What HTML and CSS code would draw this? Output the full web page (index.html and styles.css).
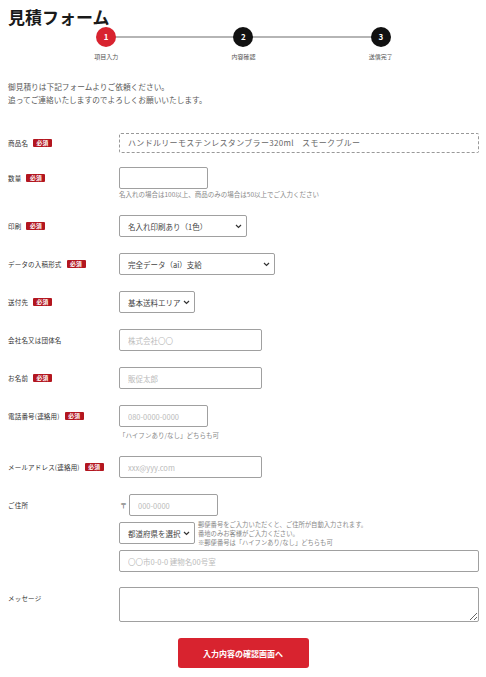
FILE: index.html
```html
<!DOCTYPE html>
<html lang="ja">
<head>
    <meta charset="UTF-8">
    <meta name="viewport" content="width=device-width, initial-scale=1.0">
    <title>見積フォーム</title>
    <link rel="stylesheet" href="styles.css">
</head>
<body>

<div class="page">
    <h1 class="title">見積フォーム</h1>

    <ol class="steps">
        <li class="step current"><span class="step-num">1</span><span class="step-label">項目入力</span></li>
        <li class="step"><span class="step-num">2</span><span class="step-label">内容確認</span></li>
        <li class="step"><span class="step-num">3</span><span class="step-label">送信完了</span></li>
    </ol>

    <p class="intro">御見積りは下記フォームよりご依頼ください。<br>追ってご連絡いたしますのでよろしくお願いいたします。</p>

    <form class="quote-form" onsubmit="event.preventDefault()">
        <div class="row row-first">
            <div class="label short">商品名<span class="req">必須</span></div>
            <div class="field">
                <div class="product">ハンドルリーモステンレスタンブラー320ml　スモークブルー</div>
            </div>
        </div>

        <div class="row">
            <div class="label">数量<span class="req">必須</span></div>
            <div class="field">
                <input type="text" class="input small">
                <div class="hint tight">名入れの場合は100以上、商品のみの場合は50以上でご入力ください</div>
            </div>
        </div>

        <div class="row">
            <div class="label">印刷<span class="req">必須</span></div>
            <div class="field">
                <span class="select-wrap w-print">
                    <select class="select"><option>名入れ印刷あり（1色）</option></select>
                    <svg class="chev" width="7" height="5" viewBox="0 0 7 5"><path d="M1 1l2.5 2.5L6 1" fill="none" stroke="#333" stroke-width="1.2"/></svg>
                </span>
            </div>
        </div>

        <div class="row">
            <div class="label">データの入稿形式<span class="req">必須</span></div>
            <div class="field">
                <span class="select-wrap w-data">
                    <select class="select"><option>完全データ（ai）支給</option></select>
                    <svg class="chev" width="7" height="5" viewBox="0 0 7 5"><path d="M1 1l2.5 2.5L6 1" fill="none" stroke="#333" stroke-width="1.2"/></svg>
                </span>
            </div>
        </div>

        <div class="row">
            <div class="label">送付先<span class="req">必須</span></div>
            <div class="field">
                <span class="select-wrap w-short">
                    <select class="select"><option>基本送料エリア</option></select>
                    <svg class="chev" width="7" height="5" viewBox="0 0 7 5"><path d="M1 1l2.5 2.5L6 1" fill="none" stroke="#333" stroke-width="1.2"/></svg>
                </span>
            </div>
        </div>

        <div class="row">
            <div class="label">会社名又は団体名</div>
            <div class="field"><input type="text" class="input medium" placeholder="株式会社〇〇"></div>
        </div>

        <div class="row">
            <div class="label">お名前<span class="req">必須</span></div>
            <div class="field"><input type="text" class="input medium" placeholder="販促太郎"></div>
        </div>

        <div class="row">
            <div class="label">電話番号(連絡用)<span class="req">必須</span></div>
            <div class="field">
                <input type="tel" class="input small" placeholder="080-0000-0000">
                <div class="hint">「ハイフンあり/なし」どちらも可</div>
            </div>
        </div>

        <div class="row">
            <div class="label">メールアドレス(連絡用)<span class="req">必須</span></div>
            <div class="field"><input type="email" class="input medium" placeholder="xxx@yyy.com"></div>
        </div>

        <div class="row row-address">
            <div class="label">ご住所</div>
            <div class="field address">
                <div class="zip-line">
                    <span class="zip-mark">〒</span>
                    <input type="text" class="input small" placeholder="000-0000">
                </div>
                <div class="pref-line">
                    <span class="select-wrap w-short">
                        <select class="select"><option>都道府県を選択</option></select>
                        <svg class="chev" width="7" height="5" viewBox="0 0 7 5"><path d="M1 1l2.5 2.5L6 1" fill="none" stroke="#333" stroke-width="1.2"/></svg>
                    </span>
                    <div class="notes">郵便番号をご入力いただくと、ご住所が自動入力されます。<br>番地のみお客様がご入力ください。<br>※郵便番号は「ハイフンあり/なし」どちらも可</div>
                </div>
                <input type="text" class="input full" placeholder="〇〇市0-0-0 建物名00号室">
            </div>
        </div>

        <div class="row">
            <div class="label">メッセージ</div>
            <div class="field"><textarea class="textarea"></textarea></div>
        </div>

        <div class="actions">
            <button type="submit" class="submit">入力内容の確認画面へ</button>
        </div>
    </form>
</div>

</body>
</html>
```

FILE: styles.css
```css
body {
    margin: 0;
    background-color: #fff;
    font-family: "Noto Sans CJK JP", "Noto Sans", sans-serif;
    color: #333;
}

.page {
    padding: 7px 7px 0 8px;
}

.title {
    margin: 0;
    font-size: 17px;
    line-height: 20px;
    font-weight: bold;
    color: #1a1a1a;
}

/* step indicator */
.steps {
    position: relative;
    display: grid;
    grid-template-columns: repeat(3, 1fr);
    width: 412px;
    margin: 0 auto;
    padding: 0;
    list-style: none;
}

.steps::before {
    content: "";
    position: absolute;
    top: 9px;
    left: 69px;
    right: 69px;
    height: 2px;
    background-color: #b5b5b5;
}

.step {
    position: relative;
    display: flex;
    flex-direction: column;
    align-items: center;
}

.step-num {
    width: 20px;
    height: 20px;
    border-radius: 50%;
    background-color: #111;
    color: #fff;
    font-size: 8px;
    font-weight: bold;
    line-height: 20px;
    text-align: center;
}

.step.current .step-num {
    background-color: #d8232f;
}

.step-label {
    margin-top: 6px;
    font-size: 6px;
    line-height: 8px;
    color: #555;
}

.intro {
    margin: 18.5px 0 0;
    font-size: 7.7px;
    line-height: 13px;
    color: #5a5a5a;
}

/* form rows */
.quote-form {
    margin-top: 27.5px;
}

.row {
    display: grid;
    grid-template-columns: 111px 1fr;
    margin-bottom: 16px;
}

.row-first {
    margin-bottom: 14px;
}

.row-address {
    margin-bottom: 15px;
}

.label {
    display: flex;
    align-items: center;
    height: 22px;
    font-size: 6.5px;
    letter-spacing: 0.03em;
    color: #333;
}

.label.short {
    height: 20px;
}

.req {
    display: inline-block;
    margin-left: 5px;
    padding: 0 3.5px;
    background-color: #b3161f;
    color: #fff;
    font-size: 5.8px;
    font-weight: bold;
    line-height: 8px;
    border-radius: 1px;
}

.field {
    display: flex;
    flex-direction: column;
    align-items: flex-start;
}

.product {
    box-sizing: border-box;
    width: 360px;
    height: 20px;
    padding-left: 8px;
    border: 1px dashed #999;
    border-radius: 2px;
    font-size: 8px;
    line-height: 18px;
    letter-spacing: 0.04em;
    color: #666;
}

.input,
.select,
.textarea {
    box-sizing: border-box;
    height: 22px;
    margin: 0;
    padding: 0 8px;
    border: 1px solid #a0a0a0;
    border-radius: 2px;
    background-color: #fff;
    font-family: inherit;
    font-size: 7.5px;
    color: #444;
    outline: none;
}

.input::placeholder {
    color: #bbb;
}

.input.small {
    display: block;
    width: 89px;
}

.input.medium {
    display: block;
    width: 143px;
}

.input.full {
    display: block;
    width: 360px;
}

.hint {
    margin-top: 4px;
    font-size: 6.5px;
    line-height: 9px;
    color: #888;
}

.hint.tight {
    margin-top: 1px;
}

/* selects */
.select-wrap {
    position: relative;
    display: block;
    flex: none;
}

.select {
    -webkit-appearance: none;
    appearance: none;
    display: block;
    width: 100%;
    padding-right: 12px;
}

.chev {
    position: absolute;
    top: 9px;
    right: 5px;
    pointer-events: none;
}

.w-print {
    width: 128px;
}

.w-data {
    width: 156px;
}

.w-short {
    width: 76px;
}

/* address block */
.address {
    gap: 6px;
}

.zip-line {
    display: flex;
    align-items: center;
    gap: 3px;
}

.zip-mark {
    width: 6px;
    padding-left: 1px;
    font-size: 7px;
    color: #555;
}

.pref-line {
    display: flex;
    align-items: center;
    gap: 3px;
    height: 22px;
}

.notes {
    margin: -2.5px 0;
    font-size: 6.3px;
    line-height: 9px;
    color: #888;
}

.textarea {
    display: block;
    width: 360px;
    height: 35px;
    padding: 4px 8px;
}

.actions {
    display: flex;
    justify-content: center;
    padding-right: 1px;
}

.submit {
    width: 131px;
    height: 30px;
    border: none;
    border-radius: 3px;
    background-color: #d8232f;
    color: #fff;
    font-family: inherit;
    font-size: 8px;
    font-weight: bold;
    cursor: pointer;
}
```
